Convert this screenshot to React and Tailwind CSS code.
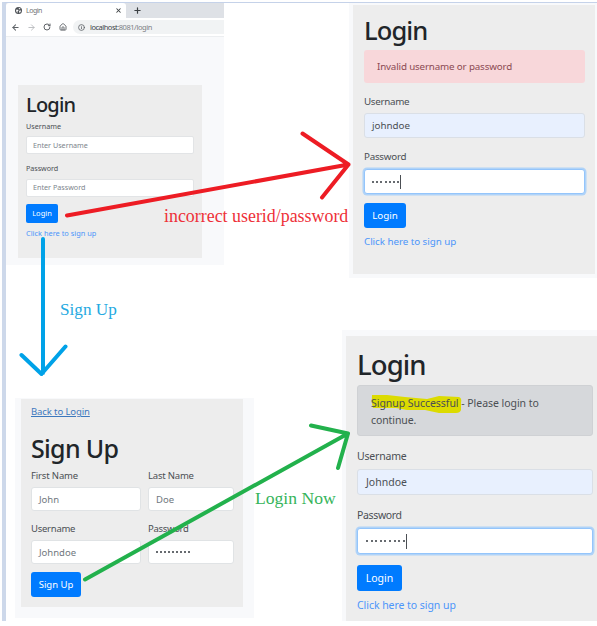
import { ArrowLeft, ArrowRight, RotateCw, House, Info, X, Plus } from "lucide-react";

function Line({ className = "", children }) {
  return <div className={`flex items-center whitespace-nowrap ${className}`}>{children}</div>;
}

function Globe() {
  return (
    <svg width="7" height="7" viewBox="0 0 14 14">
      <circle cx="7" cy="7" r="7" fill="#4b4f54" />
      <path fill="#fff" d="M2 5Q4 6 6 5L7 7L5 9L5 12Q2 10 2 5ZM7 1.500L11 3L10 5L8 4ZM9 7L12 7Q12 10 9 12L8 9Z" />
    </svg>
  );
}

function BrowserWindow() {
  return (
    <section className="ml-[6px] h-[262px] w-[218px] bg-[#f8f9fb]">
      <div className="flex h-[15px] bg-[#dee1e6]">
        <div className="flex w-[120px] items-center rounded-t-[3px] bg-white pl-[9px] pr-[4px]">
          <Globe />
          <span className="ml-[4px] text-[7px] leading-none tracking-[-0.5px] text-[#707478]">Login</span>
          <X size={7} strokeWidth={3.5} className="ml-auto text-[#3c4043]" />
        </div>
        <div className="flex items-center pl-[7px]">
          <Plus size={9} strokeWidth={3.2} className="text-[#3c4043]" />
        </div>
      </div>
      <div className="flex h-[19px] items-center border-b border-[#eceef0] bg-white pl-[5px] text-[#5f6368]">
        <ArrowLeft size={9} strokeWidth={2.8} />
        <ArrowRight size={9} strokeWidth={2.4} className="ml-[7px] text-[#b8babd]" />
        <RotateCw size={8} strokeWidth={3} className="ml-[7px]" />
        <House size={8} strokeWidth={2.8} className="ml-[8px]" />
        <div className="ml-[6px] flex h-[14px] flex-1 items-center rounded-l-full bg-[#f1f3f4] pl-[5px]">
          <Info size={7} strokeWidth={2.8} />
          <span className="ml-[5px] pt-px text-[7.500px] leading-none text-[#7d8185]">
            <span className="tracking-[-0.5px] text-[#404347]">localhost</span><span className="tracking-[-0.45px]">:8081/login</span>
          </span>
        </div>
      </div>
      <div className="ml-[12px] mt-[48px] h-[173px] w-[184px] bg-[#ededed] px-[8px] pt-[8px] text-[7.2px] text-[#4b4f54]">
        <Line className="h-[24px] text-[20px] font-medium tracking-[-0.8px] text-[#212529]">Login</Line>
        <Line className="mt-[5px] h-[10px]">Username</Line>
        <Line className="mt-[4px] h-[18px] rounded-[2px] border border-[#e2e4e6] bg-white pl-[6px] pt-px text-[#7d858c]">Enter Username</Line>
        <Line className="mt-[10px] h-[10px] tracking-[-0.05px]">Password</Line>
        <Line className="mt-[5px] h-[18px] rounded-[2px] border border-[#e2e4e6] bg-white pl-[6px] text-[#7d858c]">Enter Password</Line>
        <Line className="mt-[7px] h-[19px] w-[32px] justify-center rounded-[2px] bg-[#007bff] pt-px text-[7.500px] text-white">Login</Line>
        <Line className="mt-[6px] h-[10px] text-[7.400px] text-[#4c95fa]">Click here to sign up</Line>
      </div>
    </section>
  );
}

function Dots({ className = "gap-[2px]", count }) {
  return (
    <span className={`flex ${className}`}>
      {Array.from({ length: count }, (_, i) => (
        <span key={i} className="size-[2px] rounded-full bg-[#343a40]" />
      ))}
    </span>
  );
}

function SignUpForm() {
  return (
    <section className="ml-[15px] mt-[133px] h-[220px] w-[239px] bg-[#f8f9fb] pl-[6px] pt-px">
      <div className="h-[208px] w-[222px] bg-[#ededed] pl-[10px] pt-[6px] text-[9.5px] text-[#4b4f54]">
        <Line className="h-[14px] tracking-[-0.1px] text-[#3d78bd] underline">Back to Login</Line>
        <Line className="mt-[14px] h-[30px] text-[25px] font-medium tracking-[-0.7px] text-[#212529]">Sign Up</Line>
        <div className="mt-[6px] grid grid-cols-[110px_86px] gap-x-[7px]">
          <div>
            <Line className="h-[14px] tracking-[-0.15px]">First Name</Line>
            <Line className="mt-[4px] h-[24px] rounded-[3px] border border-[#e0e3e5] bg-white pl-[7px] pt-px text-[#70777e]">John</Line>
            <Line className="mt-[11px] h-[14px] tracking-[-0.25px]">Username</Line>
            <Line className="mt-[4px] h-[24px] rounded-[3px] border border-[#e0e3e5] bg-white pl-[7px] pt-px text-[#70777e]">Johndoe</Line>
          </div>
          <div>
            <Line className="h-[14px] tracking-[-0.2px]">Last Name</Line>
            <Line className="mt-[4px] h-[24px] rounded-[3px] border border-[#e0e3e5] bg-white pl-[7px] pt-px text-[#70777e]">Doe</Line>
            <Line className="mt-[11px] h-[14px] tracking-[-0.3px]">Password</Line>
            <Line className="mt-[4px] h-[24px] rounded-[3px] border border-[#e0e3e5] bg-white pl-[7px]">
              <Dots count={9} />
            </Line>
          </div>
        </div>
        <Line className="mt-[8px] h-[25px] w-[50px] justify-center rounded-[3px] bg-[#007bff] pt-px text-white">Sign Up</Line>
      </div>
    </section>
  );
}

function InvalidLogin() {
  return (
    <section className="ml-[7px] h-[275px] bg-[#f8f9fb] pl-[4px] pt-[2px]">
      <div className="h-[269px] w-[242px] bg-[#ededed] pl-[11px] pt-[11px] text-[9.8px] text-[#4b4f54]">
        <Line className="h-[30px] text-[25.5px] font-medium tracking-[-0.9px] text-[#212529]">Login</Line>
        <Line className="mt-[4px] h-[33px] w-[221px] rounded-[3px] bg-[#f8d7da] pl-[13px] pt-px tracking-[-0.16px] text-[#8b4a53]">Invalid username or password</Line>
        <Line className="mt-[12px] h-[14px] tracking-[-0.3px]">Username</Line>
        <Line className="mt-[4px] h-[25px] w-[221px] rounded-[3px] border border-[#dadfe6] bg-[#e8f0fe] pl-[7px] pt-px">johndoe</Line>
        <Line className="mt-[12px] h-[14px] tracking-[-0.25px]">Password</Line>
        <Line className="mt-[5px] h-[25px] w-[221px] rounded-[3px] border border-[#94c5fb] bg-white pl-[7px] ring-[1.5px] ring-[#b0d3f8]">
          <Dots count={7} className="gap-[2.2px]" />
          <span className="ml-px h-[14px] w-px bg-[#4b4f54]" />
        </Line>
        <Line className="mt-[9px] h-[25px] w-[42px] justify-center rounded-[3px] bg-[#007bff] pt-px text-white">Login</Line>
        <Line className="mt-[7px] h-[14px] tracking-[-0.05px] text-[#4c95fa]">Click here to sign up</Line>
      </div>
    </section>
  );
}

function SuccessLogin() {
  return (
    <section className="mt-[52px] h-[291px] bg-[#f8f9fb] pl-[4px] pt-[6px]">
      <div className="h-[285px] bg-[#ededed] pl-[11px] pt-[13px] text-[10.5px] text-[#4b4f54]">
        <Line className="h-[32px] text-[27.5px] font-medium tracking-[-0.9px] text-[#212529]">Login</Line>
        <div className="relative mt-[4px] h-[51px] w-[236px] rounded-[3px] border border-[#cfd1d4] bg-[#d6d8db] pl-[13px] pt-[9px]">
          <svg className="absolute left-[13px] top-[8px]" width="92" height="20" viewBox="0 0 92 20" fill="#dcdb00">
            <path d="M1 1L16 1L34 3L56 5L68 2L88 3Q91 4 90 9V16Q89 19 85 19L68 19L54 16L36 16L25 14L2 14Q0 8 1 1Z" />
          </svg>
          <div className="relative">
            <Line className="h-[17px] tracking-[-0.04px]">Signup Successful - Please login to</Line>
            <Line className="h-[16px] tracking-[-0.1px]">continue.</Line>
          </div>
        </div>
        <Line className="mt-[13px] h-[14px] tracking-[-0.2px]">Username</Line>
        <Line className="mt-[6px] h-[26px] w-[236px] rounded-[3px] border border-[#dadfe6] bg-[#e8f0fe] pl-[8px] pt-px">Johndoe</Line>
        <Line className="mt-[13px] h-[14px] tracking-[-0.35px]">Password</Line>
        <Line className="mt-[6px] h-[26px] w-[236px] rounded-[3px] border border-[#94c5fb] bg-white pl-[8px] ring-[1.5px] ring-[#b0d3f8]">
          <Dots count={9} className="gap-[2.600px]" />
          <span className="ml-px h-[15px] w-px bg-[#4b4f54]" />
        </Line>
        <Line className="mt-[11px] h-[26px] w-[45px] justify-center rounded-[3px] bg-[#007bff] text-white">Login</Line>
        <Line className="mt-[7px] h-[14px] tracking-[-0.05px] text-[#4c95fa]">Click here to sign up</Line>
      </div>
    </section>
  );
}

function Annotations() {
  return (
    <div className="pointer-events-none absolute inset-0 whitespace-nowrap font-['Liberation_Serif',serif] text-[17.2px] leading-none">
      <svg className="absolute inset-0" width="597" height="626" fill="none" strokeWidth="4" strokeLinecap="round" strokeLinejoin="round">
        <path stroke="#ed1c24" d="M67 215.500L348.500 164.500M302.500 133.500L348.500 164.500L322 197.500" />
        <path stroke="#00a2e8" d="M43 239V373M21.500 355L41.500 374L65.500 346.500" />
        <path stroke="#22b14c" d="M85 579.500L348 433.500M311 425.500L348 433.500L338 468" />
      </svg>
      <span className="absolute left-[164px] top-[208px] text-[17.900px] text-[#ee3038]">incorrect userid/password</span>
      <span className="absolute left-[60px] top-[301px] text-[#24a9e1]">Sign Up</span>
      <span className="absolute left-[255px] top-[490px] text-[17.600px] text-[#35b45a]">Login Now</span>
    </div>
  );
}

export default function App() {
  return (
    <main className="relative h-[626px] w-[597px] overflow-hidden bg-white font-['Noto_Sans',sans-serif] leading-none">
      <div className="pl-[2px] pt-[2px]">
        <div className="flex h-[619px] border-l-[4px] border-t border-l-[#cdd8ea] border-t-[#c5d2e9]">
          <div className="-ml-[6px] w-[342px] shrink-0">
            <BrowserWindow />
            <SignUpForm />
          </div>
          <div className="min-w-0 flex-1">
            <InvalidLogin />
            <SuccessLogin />
          </div>
        </div>
      </div>
      <Annotations />
    </main>
  );
}
